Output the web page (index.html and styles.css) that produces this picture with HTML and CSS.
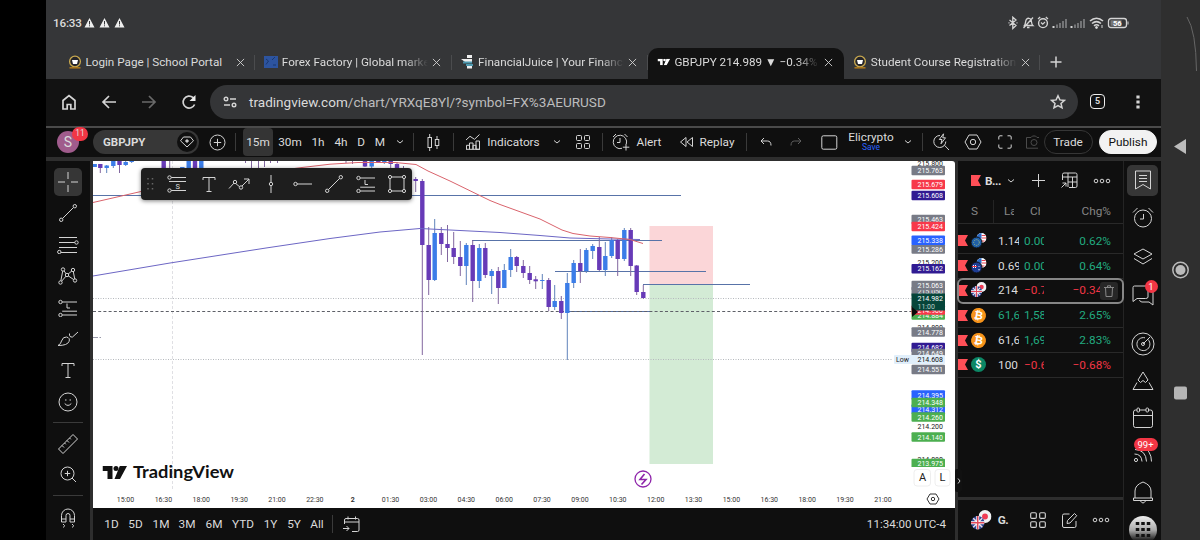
FILE: index.html
```html
<!DOCTYPE html>
<html lang="en">
<head>
  <meta charset="UTF-8">
  <title>GBPJPY 214.989 ▼ −0.34%</title>
  <link rel="stylesheet" href="styles.css">
</head>
<body>
  <svg width="0" height="0" class="sprite">
    <symbol id="close" viewBox="0 0 10 10"><path d="M1 1l8 8M9 1l-8 8"/></symbol>
    <symbol id="chev" viewBox="0 0 8 6"><path d="M1 1.500l3 2.500 3-2.500"/></symbol>
    <symbol id="flag" viewBox="0 0 10 11"><path d="M0 0h10l-3 5.500 3 5.500H0z" fill="#ff4f57" stroke="none"/></symbol>
    <symbol id="tiles" viewBox="0 0 16 16"><rect x="1.500" y="1.500" width="5" height="5" rx="1"/><rect x="9.500" y="1.500" width="5" height="5" rx="1"/><rect x="1.500" y="9.500" width="5" height="5" rx="1"/><rect x="9.500" y="9.500" width="5" height="5" rx="1"/></symbol>
    <symbol id="dots" viewBox="0 0 18 6"><circle cx="3" cy="3" r="1.800"/><circle cx="9" cy="3" r="1.800"/><circle cx="15" cy="3" r="1.800"/></symbol>
    <symbol id="fib" viewBox="0 0 20 18"><circle cx="2.500" cy="3" r="1.700"/><path d="M4.200 3H19M4.200 16H19M4.200 12.200H19"/><circle cx="2.500" cy="16" r="1.700"/></symbol>
    <symbol id="line" viewBox="0 0 18 18"><circle cx="2.200" cy="15.800" r="1.700"/><circle cx="15.800" cy="2.200" r="1.700"/><path d="M3.500 14.500l11-11"/></symbol>
    <symbol id="text" viewBox="0 0 14 17"><path d="M1 4V1.500h12V4M7 1.500v14M4.500 15.500h5"/></symbol>
    <symbol id="school" viewBox="0 0 14 14"><circle cx="7" cy="6.500" r="5.400" fill="#25252b" stroke="#c9a94f" stroke-width="1.300"/><path d="M4 5h6l-1 4H5z" fill="#fff" stroke="none"/><path d="M1.500 12.800h11" stroke="#a8751c" stroke-width="1.600"/></symbol>
    <symbol id="tv" viewBox="0 0 25 13"><path d="M0 0h10v13H5V5H0zM17.500 13H12L17.300 0H24.500z"/><circle cx="13.500" cy="2.500" r="2.500"/></symbol>
    <symbol id="uk" viewBox="0 0 12 12"><circle cx="6" cy="6" r="6" fill="#2c4796" stroke="none"/><path d="M2 2l8 8M10 2l-8 8" stroke="#f3dfe6" stroke-width="1.300"/><path d="M6 0v12M0 6h12" stroke="#fff" stroke-width="2.600"/><path d="M6 0v12M0 6h12" stroke="#e0485a" stroke-width="1.300"/></symbol>
    <symbol id="us" viewBox="0 0 10 10"><circle cx="5" cy="5" r="5" fill="#fff" stroke="none"/><path d="M5 2.500h4M5 5h5M2 8h6" stroke="#e6404e" stroke-width="1.200"/><path d="M5 0A5 5 0 0 0 0 5.500h5z" fill="#2b6cc9" stroke="none"/></symbol>
    <symbol id="jp" viewBox="0 0 12 12"><circle cx="6" cy="6" r="6" fill="#f2f2f4" stroke="none"/><circle cx="6" cy="6" r="2.700" fill="#f03c55" stroke="none"/></symbol>
  </svg>

  <div class="screen">
    <main class="app">
      <!-- Android status bar -->
      <div class="status">
        <span class="clock">16:33</span>
        <svg class="warn" width="42" height="12" viewBox="0 0 42 12"><path d="M5.500 1l5 9.500H.5zM20.500 1l5 9.500h-10zM35.500 1l5 9.500h-10z" fill="#eee" stroke="none"/><path d="M5.500 4v3.500M20.500 4v3.500M35.500 4v3.500M5.500 8.300v1M20.500 8.300v1M35.500 8.300v1" stroke="#353638"/></svg>
        <svg class="sys" width="122" height="14" viewBox="0 0 122 14">
          <path d="M2.500 4l6.500 5.500-3.200 3V1.200L9 4 2.500 9.500M1.500 6.800h1M9.500 6.800h1" stroke-width="1.300"/>
          <path d="M17.500 9.500c1.200-1.300.8-5 2-6.300 1.500-1.400 3.500-1.200 4.500.5.800 1.700.2 4.500 1.800 5.800zM20 11.500h2.500M16.500 12L26 1.500" stroke-width="1.300"/>
          <circle cx="36" cy="7.200" r="4.400" stroke-width="1.400"/><path d="M34 6.500l1.700 1.700L38 6M31 3l2.200-2M41 3l-2.200-2" stroke-width="1.200"/>
          <path d="M46.500 10v2M64.500 10v2" stroke-width="2"/>
          <path d="M50 8.500v3.500M53 7v5M56 5v7M59 3v9M68 8.500v3.500M71 7v5M74 5v7M77 3v9" stroke="#7b7c7e" stroke-width="1.800"/>
          <path d="M83 5c4-3.600 9-3.600 13 0M85 7.500c3-2.500 6-2.500 9 0M87 9.800c1.500-1.200 3.500-1.200 5 0" stroke-width="1.600"/><circle cx="89.500" cy="11.500" r="1" fill="#ddd"/><path d="M95 9v3"/>
          <rect x="101.500" y="2.500" width="18" height="9" rx="2.500" stroke-width="1.300"/><rect x="103.500" y="4.200" width="11" height="5.600" fill="#777" stroke="none"/><path d="M121 5.500v3"/>
          <text x="106" y="9.800" font-size="7.500" font-weight="700" fill="#fff" stroke="none">56</text>
        </svg>
      </div>

      <!-- browser tabs -->
      <div class="tabs">
        <div class="tab"><svg class="fav"><use href="#school"/></svg><span>Login Page | School Portal</span><svg class="x"><use href="#close"/></svg></div>
        <div class="tab"><svg class="fav" viewBox="0 0 14 14"><path d="M0 1h14v12H0z" fill="#2d549f" stroke="none"/><path d="M2 4l2.500 2L2 9.500M8 5l3-3M9 10h3" stroke="#19376f"/></svg><span class="fade">Forex Factory | Global markets</span><svg class="x"><use href="#close"/></svg></div>
        <div class="tab"><svg class="fav" viewBox="0 0 14 14"><path d="M6 0h5v3H6zM0 4h11v3H4zM6 11h5v2.500H6z" fill="#eee" stroke="none"/><path d="M2 7.500h9M5 10h7" stroke="#4d98ae" stroke-width="2"/></svg><span class="fade">FinancialJuice | Your Financial</span><svg class="x"><use href="#close"/></svg></div>
        <div class="tab active"><svg class="fav" viewBox="-1 -3 27 19"><use href="#tv" width="25" height="13" fill="#fff" stroke="none"/></svg><span class="fade">GBPJPY 214.989 ▼ −0.34%</span><svg class="x"><use href="#close"/></svg></div>
        <div class="tab"><svg class="fav"><use href="#school"/></svg><span class="fade">Student Course Registration</span><svg class="x"><use href="#close"/></svg></div>
        <svg class="newtab" width="12" height="12" viewBox="0 0 12 12"><path d="M6 .5v11M.5 6h11" stroke-width="1.500"/></svg>
      </div>

      <!-- address bar -->
      <div class="address">
        <svg width="16" height="16" viewBox="0 0 16 16"><path d="M2 6.500l6-5 6 5V15h-4.200v-4.500H6.200V15H2z" stroke-width="1.700"/></svg>
        <svg width="16" height="16" viewBox="0 0 16 16"><path d="M15 8H2M8 2L2 8l6 6" stroke-width="1.700"/></svg>
        <svg class="off" width="16" height="16" viewBox="0 0 16 16"><path d="M1 8h13M8 2l6 6-6 6" stroke-width="1.700"/></svg>
        <svg width="16" height="16" viewBox="0 0 16 16"><path d="M13.600 10.500A6 6 0 1 1 12 3.500l1 1" stroke-width="1.700"/><path d="M14.500 1v6h-6z" fill="#eee" stroke="none"/></svg>
        <div class="url">
          <svg width="14" height="12" viewBox="0 0 14 12"><circle cx="3" cy="3" r="1.800" stroke-width="1.400"/><path d="M7 3h6M1 9h6" stroke-width="1.500"/><circle cx="11" cy="9" r="1.800" stroke-width="1.400"/></svg>
          <span>tradingview.com<i>/chart/YRXqE8Yl/?symbol=FX%3AEURUSD</i></span>
          <svg class="star" width="16" height="16" viewBox="0 0 16 16"><path d="M8 1.800l1.900 4.100 4.500.5-3.400 3 1 4.400L8 11.500l-4 2.300 1-4.400-3.400-3 4.500-.5z" stroke-width="1.500"/></svg>
        </div>
        <b class="count">5</b>
        <svg width="6" height="14" viewBox="0 0 6 14"><path d="M3 .5v3M3 5.500v3M3 10.500v3" stroke-width="3.200"/></svg>
      </div>

      <!-- chart toolbar -->
      <div class="toolbar">
        <div class="avatar">S<em>11</em></div>
        <div class="symbol">GBPJPY<i><svg width="14" height="12" viewBox="0 0 14 12"><path d="M3.500 1h7l3 3.800L7 11 .5 4.800z"/><path d="M7 3.500l1.500 1.500L7 6.500 5.500 5z" fill="#ddd"/></svg></i></div>
        <svg width="17" height="17" viewBox="0 0 17 17"><circle cx="8.500" cy="8.500" r="7.500"/><path d="M8.500 4.800v7.400M4.800 8.500h7.400"/></svg>
        <hr>
        <b class="on">15m</b><b>30m</b><b>1h</b><b>4h</b><b>D</b><b>M</b>
        <svg width="8" height="6"><use href="#chev"/></svg>
        <hr>
        <svg width="13" height="17" viewBox="0 0 13 17"><rect x="1" y="3.500" width="3.500" height="10"/><path d="M2.700 0v3.500M2.700 13.500V17M10 2v3.500M10 11.500V15"/><rect x="8.300" y="5.500" width="3.500" height="6"/></svg>
        <hr>
        <svg width="16" height="16" viewBox="0 0 16 16"><path d="M1.500 15.300v-4h3v4M4.500 15.300V9h3.500v6.300M8 15.300v-4h3v4M11 15.300V7h3.500v8.300zM1 15.300h14M1 6l4-3.700 4.500 3 5-4.800"/></svg>
        <b>Indicators</b>
        <svg width="8" height="6"><use href="#chev"/></svg>
        <svg width="16" height="16"><use href="#tiles"/></svg>
        <hr>
        <svg width="18" height="18" viewBox="0 0 18 18"><path d="M14.300 11A6.700 6.700 0 1 0 10 15.300M8 5v4.500H5M1 4l3-3M15.500 4l-3-3M14 11v6.500M10.800 14.200h6.500"/></svg>
        <b>Alert</b>
        <svg width="15" height="12" viewBox="0 0 15 12"><path d="M7 1.500v9L1.500 6zM13.500 1.500v9L8 6z"/></svg>
        <b>Replay</b>
        <hr>
        <svg width="12" height="10" viewBox="0 0 12 10"><path d="M4 1L1 4l3 3M1 4h6.500q3.500 0 3.500 4.500"/></svg>
        <svg class="off" width="12" height="10" viewBox="0 0 12 10"><path d="M8 1l3 3-3 3M11 4H4.500Q1 4 1 8.500"/></svg>
        <svg width="17" height="15" viewBox="0 0 17 15"><rect x=".8" y=".8" width="15" height="13.400" rx="1.500"/></svg>
        <div class="layout">Elicrypto<em>Save</em></div>
        <svg width="8" height="6"><use href="#chev"/></svg>
        <hr>
        <svg width="17" height="18" viewBox="0 0 17 18"><path d="M7 2.500a6 6 0 1 0 5.800 6M11.500 12.300L16 17M10.500.8L6.300 6.500H9l-1 4.300 4.500-6H9.800z"/></svg>
        <svg width="18" height="16" viewBox="0 0 18 16"><path d="M5 1h8l4 7-4 7H5L1 8z"/><circle cx="9" cy="8" r="2.700"/></svg>
        <svg width="14" height="14" viewBox="0 0 14 14"><path d="M.8 4.500V2Q.8.800 2 .8h2.500M9.500.8H12q1.200 0 1.200 1.200v2.500M13.200 9.500V12q0 1.200-1.200 1.200H9.500M4.500 13.200H2Q.8 13.200.8 12V9.500"/></svg>
        <svg class="cam" width="14" height="14" viewBox="0 0 14 14"><path d="M14 2.500h-2L10.500 1h-3L6 2.500H1.500v10.700H13"/><circle cx="9" cy="7.500" r="3"/></svg>
        <div class="trade">Trade</div>
        <div class="publish">Publish</div>
      </div>

      <div class="work">
        <!-- drawing tools -->
        <div class="tools">
          <i class="sel"><svg width="20" height="20" viewBox="0 0 20 20"><path d="M10 0v7M10 13v7M0 10h7M13 10h7"/></svg></i>
          <svg width="18" height="18"><use href="#line"/></svg>
          <svg width="22" height="18" viewBox="0 0 22 18"><path d="M2 1.500h18M2 6.500h16M2 11.500h18M4 16.500h16"/><circle cx="19.500" cy="6.500" r="1.700" fill="#0f0f0f"/><circle cx="2.300" cy="16" r="1.700" fill="#0f0f0f"/></svg>
          <svg width="20" height="18" viewBox="0 0 20 18"><path d="M2.500 15.500l2.500-13L9 8l6-5 2 10.500L9 8l-6.500 7.500"/><g fill="#0f0f0f"><circle cx="2.500" cy="15.500" r="1.700"/><circle cx="5" cy="2.500" r="1.700"/><circle cx="9" cy="8" r="1.700"/><circle cx="15" cy="3" r="1.700"/><circle cx="17" cy="13.500" r="1.700"/></g></svg>
          <svg width="20" height="18"><use href="#fib"/><path d="M9 4.500V9h3"/></svg>
          <svg width="22" height="16" viewBox="0 0 22 16"><path d="M1 14.500Q4 13 4.500 10 6 5.500 9.500 6q4 1 2.500 4.500-1.500 4-11 4M12.500 2.500q-.5 4 3 3.500L21 1"/></svg>
          <svg width="14" height="17"><use href="#text"/></svg>
          <svg width="20" height="20" viewBox="0 0 20 20"><circle cx="10" cy="10" r="9"/><path d="M6.700 11.500q3.300 3.800 6.600 0M7 8h1.500M11.500 8H13"/></svg>
          <hr>
          <svg width="22" height="22" viewBox="0 0 22 22"><path d="M1.500 16L16 1.500 20.500 6 6 20.500zM5 12.500l2 2M7.500 10l1.300 1.300M10 7.500l2 2M12.500 5l1.300 1.300"/></svg>
          <svg width="17" height="17" viewBox="0 0 17 17"><circle cx="7.500" cy="7.500" r="6.500"/><path d="M12 12l4 4M7.500 4.800v5.400M4.800 7.500h5.400"/></svg>
          <hr>
          <svg width="16" height="20" viewBox="0 0 16 20"><path d="M1.500 14V7.500a6.500 6.500 0 0 1 13 0V14H10V7.500a2 2 0 0 0-4 0V14zM1.500 11H6M10 11h4.500M3 16l1.500 1.500-1 2M12 16l1.500 1.500-1 2"/></svg>
        </div>

        <section class="center">
          <!-- viewBox uses page coordinates; candles are appended by script.js -->
          <svg class="chart" width="862" height="347" viewBox="93 161 862 347">
            <rect x="93" y="161" width="862" height="347" fill="#fff" stroke="none"/>
            <rect x="649.500" y="226" width="63.500" height="59" fill="#fbd6d8" stroke="none"/>
            <rect x="649.500" y="285" width="63.500" height="179" fill="#d3ebd5" stroke="none"/>
            <path d="M172.500 161v330" stroke="#e0e0e4" stroke-dasharray="3 2"/>
            <path d="M93 298.500h819M93 359.500h800" stroke="#b5b8bd" stroke-dasharray="1 1.500"/>
            <path d="M93 337.500h5M99.500 337.500h1.500" stroke="#99a"/>
            <path d="M93 195.500H681M567 311.500h84M472 240.500h190M555 271.500h151M643 284.500h107" stroke="#5873a8"/>
            <path d="M93 311.500h819" stroke="#5e6068" stroke-dasharray="3 2.200"/>
            <g id="candles"></g>
            <path d="M93 276l77-13 96-15 64-9.500 50-6.500 40-3.500 30 1.500 50 2.500 40 3 30 2.500 40 1 30 .5" stroke="#6c66c4"/>
            <path d="M93 202.500l48-11 100-16 61-8 28-3.300 28-1.700h37l21 2 12 6.500 22 10 40 19.500 10 4 40 14.500 22 11 11 3.500 17 2.500 20 1.500 20 2 13 4" stroke="#d9636c"/>
            <g id="prices"></g>
            <path d="M912 307l6 5-6 5z" fill="#0b0b0b" stroke="none"/>
            <g fill="#fff" stroke="#eee"><rect x="914" y="469.500" width="16.500" height="16.500" rx="3"/><rect x="935" y="469.500" width="15" height="16.500" rx="3"/></g>
            <g font-size="11" fill="#222" stroke="none"><text x="919" y="481">A</text><text x="939.500" y="481">L</text></g>
            <g id="times" font-size="7" fill="#333" stroke="none" text-anchor="middle"></g>
            <g stroke="#333" fill="none"><path d="M930 494h6l3 5-3 5h-6l-3-5z"/><circle cx="933" cy="499" r="1.700"/></g>
            <g fill="none" stroke="#8e24aa"><circle cx="643" cy="479" r="8" stroke-width="1.300"/><path d="M644.500 474l-4.500 5.500h6l-4.500 5" stroke-width="1.600"/></g>
            <g fill="#111" stroke="none"><use href="#tv" x="102.500" y="466" width="25" height="13"/><text class="brand" x="133" y="478.300" textLength="101" lengthAdjust="spacingAndGlyphs">TradingView</text></g>
          </svg>

          <div class="floatbar">
            <svg width="8" height="14" viewBox="0 0 8 14"><path d="M2 1v12M6.500 1v12" stroke="#666" stroke-width="1.500" stroke-dasharray="1.500 3.500"/></svg>
            <svg width="20" height="18" viewBox="0 0 20 18"><circle cx="2.500" cy="2.500" r="1.700"/><circle cx="2.500" cy="15.500" r="1.700"/><path d="M4.200 2.500H19M4.200 15.500H19M2 6.500H19"/><text x="8.500" y="14" font-size="7.500" fill="#ddd" stroke="none">S</text></svg>
            <svg width="14" height="17"><use href="#text"/></svg>
            <svg width="23" height="14" viewBox="0 0 23 14"><path d="M1 11.500l5.500-6 6 5L21 2M16 2h5v5"/><g fill="#1e1e1e"><circle cx="7" cy="5" r="1.700"/><circle cx="13" cy="10.500" r="1.700"/></g></svg>
            <svg width="8" height="18" viewBox="0 0 8 18"><path d="M4 0v18"/><circle cx="4" cy="9" r="1.700" fill="#1e1e1e"/></svg>
            <svg width="19" height="6" viewBox="0 0 19 6"><path d="M4 3h15"/><circle cx="2.500" cy="3" r="1.700"/></svg>
            <svg width="18" height="18"><use href="#line"/></svg>
            <svg width="20" height="18"><use href="#fib"/><path d="M9 5v4.500h3"/></svg>
            <svg width="18" height="18" viewBox="0 0 18 18"><rect x="2" y="2" width="14" height="14"/><g fill="#1e1e1e"><circle cx="2" cy="2" r="1.600"/><circle cx="16" cy="2" r="1.600"/><circle cx="2" cy="16" r="1.600"/><circle cx="16" cy="16" r="1.600"/></g></svg>
          </div>

          <footer>
            <b>1D</b><b>5D</b><b>1M</b><b>3M</b><b>6M</b><b>YTD</b><b>1Y</b><b>5Y</b><b>All</b>
            <hr>
            <svg width="17" height="17" viewBox="0 0 17 17"><path d="M1.500 8V4q0-1.500 1.500-1.500h11.500Q16 2.500 16 4v10q0 1.500-1.500 1.500H9M1.500 6H16M5 .5v3M12.500.5v3M0 12.500h6M3.500 10L6 12.500 3.500 15"/></svg>
            <span>11:34:00 UTC-4</span>
          </footer>
        </section>

        <!-- watchlist -->
        <aside class="watch">
          <i class="handle"><svg width="4" height="8" viewBox="0 0 4 8"><path d="M1 1.500L3 4 1 6.500"/></svg></i>
          <div class="whead">
            <svg width="10" height="11"><use href="#flag"/></svg><b>B...</b>
            <svg width="8" height="6"><use href="#chev"/></svg>
            <svg width="13" height="13" viewBox="0 0 13 13"><path d="M6.500 0v13M0 6.500h13"/></svg>
            <svg width="17" height="17" viewBox="0 0 17 17"><path d="M1.500 8V2.500q0-1.500 1.500-1.500h11.500q1.500 0 1.500 1.500v11.500q0 1.500-1.500 1.500H8M1.500 5H16M7 1v14M11.500 5v10.500M7 10h9M.5 15.500l4.500-4.500M1.500 11H5v3.500"/></svg>
            <svg width="18" height="6"><use href="#dots"/></svg>
          </div>
          <div class="cols"><span>S</span><span>Last</span><span>Chg</span><span>Chg%</span></div>
          <div class="row"><svg class="rf"><use href="#flag"/></svg><svg class="pair"><use href="#us" x="5.500" width="10" height="10"/><circle cx="5.500" cy="9.500" r="5.500" fill="#1f5fa8" stroke="#0f0f0f"/><circle cx="5.500" cy="9.500" r="2.800" stroke="#aabf78" stroke-dasharray="1 1"/></svg><span>1.14</span><span class="up">0.00</span><span class="up">0.62%</span></div>
          <div class="row"><svg class="rf"><use href="#flag"/></svg><svg class="pair"><use href="#us" x="5.500" width="10" height="10"/><circle cx="5.500" cy="9.500" r="5.500" fill="#1d3c93" stroke="#0f0f0f"/><path d="M2 7l3 3M5 7l-3 3M8 8v.8M8 11v1.300" stroke="#fff"/><path d="M1 8.500h5" stroke="#e34"/></svg><span>0.69</span><span class="up">0.00</span><span class="up">0.64%</span></div>
          <div class="row picked"><svg class="rf"><use href="#flag"/></svg><svg class="pair"><use href="#jp" x="5.500" width="10" height="10"/><use href="#uk" y="4" width="11" height="11"/></svg><span>214</span><span class="down">−0.73</span><span class="down">−0.34%</span><i class="trash"><svg width="10" height="12" viewBox="0 0 10 12"><path d="M0 2.500h10M3.500 2.500V.8h3v1.700M1.500 2.500l.5 9h6l.5-9"/></svg></i></div>
          <div class="row"><svg class="rf"><use href="#flag"/></svg><i class="coin btc">₿</i><span class="up">61,68</span><span class="up">1,588</span><span class="up">2.65%</span></div>
          <div class="row"><svg class="rf"><use href="#flag"/></svg><i class="coin btc">₿</i><span>61,68</span><span class="up">1,695</span><span class="up">2.83%</span></div>
          <div class="row"><svg class="rf"><use href="#flag"/></svg><i class="coin usd">$</i><span>100</span><span class="down">−0.68</span><span class="down">−0.68%</span></div>
          <div class="detail">
            <svg width="21" height="20" viewBox="0 0 21 20"><use href="#jp" x="7.500" width="13" height="13"/><use href="#uk" y="6" width="13.500" height="13.500"/></svg><b>G.</b>
            <svg width="18" height="18"><use href="#tiles"/></svg>
            <svg width="17" height="17" viewBox="0 0 17 17"><path d="M8.500 2H3Q1.500 2 1.500 3.500V14q0 1.500 1.500 1.500h10.500q1.500 0 1.500-1.500V9M6 11.500l.5-3L13.500 1.500l2.200 2.200L9 11z"/></svg>
            <svg width="18" height="6"><use href="#dots"/></svg>
          </div>
        </aside>

        <!-- right widget bar -->
        <nav class="widgets">
          <i class="sel"><svg width="18" height="20" viewBox="0 0 18 20"><path d="M1.500 1h15v18L9 14.500 1.500 19zM5 5.500h8M5 8.500h8M5 11.500h8"/></svg></i>
          <svg width="22" height="21" viewBox="0 0 22 21"><circle cx="11" cy="11.500" r="8.500"/><path d="M11.500 7v5H8M1 5.500L5.500 1M21 5.500L16.500 1"/></svg>
          <svg width="20" height="18" viewBox="0 0 20 18"><path d="M10 1l9 5-9 5-9-5zM1 10.500l9 5.500 9-5.500"/></svg>
          <div class="bub"><svg width="22" height="22" viewBox="0 0 22 22"><path d="M14.500 1H2.500Q1 1 1 2.500v14l4-3h8.500Q16 13.500 16 12V6M18 6q3 0 3 1.500v12.500l-4-3H10q-2 0-2.500-2"/></svg><em>1</em></div>
          <svg width="24" height="24" viewBox="0 0 24 24"><circle cx="12" cy="12" r="11"/><path d="M17 7.500A6.500 6.500 0 1 1 14 5.800M12 12l7-7"/><circle cx="12" cy="12" r="1.500"/></svg>
          <svg width="22" height="20" viewBox="0 0 22 20"><path d="M11 1l5 8-2.500 2.500L11 9.500l-2.500 2L6 9zM5 11.500L1 18.500h20l-4-7"/></svg>
          <svg width="22" height="22" viewBox="0 0 22 22"><rect x="1.500" y="3" width="19" height="17.500" rx="2"/><path d="M1.500 8.500h19"/><g fill="#0f0f0f"><rect x="5" y="1" width="2.500" height="4" rx="1"/><rect x="14" y="1" width="2.500" height="4" rx="1"/></g></svg>
          <div class="feed"><svg width="20" height="17" viewBox="0 0 20 17"><circle cx="3" cy="14" r="1.600"/><path d="M1.500 8q7 0 7.500 7.500M2 3.500q11 .5 11.500 12M8 0q10.500 4 10.500 15.500"/></svg><em>99+</em></div>
          <svg width="22" height="23" viewBox="0 0 22 23"><path d="M3 17V10q0-6 8-9 8 3 8 9v7M1.500 17h19v2.500h-19zM8.500 20q2.500 4 5 0"/></svg>
          <i class="apps"><svg width="16" height="16" viewBox="0 0 16 16"><path d="M2.500 0v16M8 0v16M13.500 0v16" stroke="#111" stroke-width="3.500" stroke-dasharray="3 3"/></svg></i>
        </nav>
      </div>
    </main>

    <div class="phone">
      <svg width="39" height="540" viewBox="0 0 39 540"><path d="M26 17q9 14 9.500 54" stroke="#666"/><path d="M13 146.500l12-7.500v15z" fill="#bbb" stroke="none"/><circle cx="19.500" cy="270" r="7.700" stroke="#bbb" stroke-width="1.500"/><circle cx="19.500" cy="270" r="5" fill="#bbb" stroke="none"/><rect x="13" y="386.500" width="13" height="13" rx="2" fill="#b5b5b5" stroke="none"/></svg>
    </div>
  </div>
  <script src="script.js"></script>
</body>
</html>
```

FILE: styles.css
```css
:root {
  --panel: #0f0f0f;
  --gap: #2e2e2e;
  --chrome: #353638;
  --red: #f23645;
  --up: #22ab80;
}
* {
  box-sizing: border-box;
}
body {
  margin: 0;
  background: #000;
  color: #dbdbdb;
  font-family: Roboto, "Liberation Sans", sans-serif;
  font-size: 11.800px;
}
svg {
  display: block;
  flex: none;
  fill: none;
  stroke: #d4d4d4;
}
.sprite {
  position: absolute;
}
i, em {
  font-style: normal;
}
b {
  font-weight: 400;
}
hr {
  width: 1px;
  height: 18px;
  margin: 0;
  border: 0;
  background: #3a3a3a;
}
.screen {
  display: flex;
  width: 1200px;
  height: 540px;
  padding-left: 46px;
  overflow: hidden;
}
.app {
  width: 1115px;
}
.phone {
  width: 39px;
  background: #2f2f2f;
}

/* status bar */
.status {
  display: flex;
  align-items: center;
  height: 48px;
  padding: 0 32px 2px 7px;
  background: var(--chrome);
}
.clock {
  width: 31px;
  font-size: 11.700px;
  font-weight: 500;
  letter-spacing: -.2px;
}
.sys {
  margin-left: auto;
}

/* tabs */
.tabs {
  display: flex;
  align-items: center;
  height: 31px;
  padding-left: 13px;
  background: var(--chrome);
}
.tab {
  display: flex;
  align-items: center;
  width: 196.300px;
  height: 31px;
  padding-left: 9px;
  padding-bottom: 3px;
  font-size: 11.700px;
  background: linear-gradient(#4b4c4e, #4b4c4e) right 7px / 1px 15px no-repeat;
}
.tab span {
  width: 146px;
  margin-left: 3.500px;
  overflow: hidden;
  white-space: nowrap;
}
.tab .fade {
  -webkit-mask-image: linear-gradient(90deg, #000 84%, transparent);
  mask-image: linear-gradient(90deg, #000 84%, transparent);
}
.fav {
  width: 14px;
  height: 14px;
}
.x {
  width: 9px;
  height: 9px;
  margin-left: 4px;
}
.tab.active {
  background: #121212;
  border-radius: 10px 10px 0 0;
}
.newtab {
  margin: -3px 0 0 10px;
}

/* address bar */
.address {
  display: flex;
  align-items: center;
  height: 49px;
  padding: 0 20px 2px 15px;
  background: #121212;
  border-bottom: 2px solid #4a4a4a;
}
.address > svg {
  margin-right: 24px;
}
.address > svg:last-child {
  margin: 0 0 0 auto;
}
.address .off {
  opacity: .45;
}
.url {
  display: flex;
  align-items: center;
  width: 868px;
  height: 34px;
  margin-left: -11px;
  padding: 0 12px 0 13px;
  border-radius: 17px;
  background: #343537;
  font-size: 13.550px;
}
.url span {
  margin-left: 12px;
}
.url i {
  color: #bcbcbd;
}
.url .star {
  margin-left: auto;
}
.count {
  width: 15px;
  height: 15px;
  margin-left: 12px;
  border: 1.500px solid #eee;
  border-radius: 4px;
  font-size: 9px;
  font-weight: 700;
  line-height: 12px;
  text-align: center;
}

/* toolbar */
.toolbar {
  display: grid;
  grid-template-columns: 44px 115px 24px 13px 32px 32px 24px 22px 18px 20px 20px 7px 33px 6px 33px 49px 38px 13px 26px 12px 44px 30px 32px 26px 14px 46px 20px 64px 10px 18px 20px 44px 19px 36px 40px 71px;
  align-items: center;
  justify-items: center;
  height: 29px;
  padding-bottom: 2px;
  background: var(--panel);
}
.toolbar b {
  white-space: nowrap;
}
.toolbar .on {
  width: 30px;
  height: 28px;
  line-height: 28px;
  border-radius: 4px;
  background: #343434;
  text-align: center;
}
.toolbar .off {
  opacity: .4;
}
.avatar {
  position: relative;
  width: 22px;
  height: 22px;
  border-radius: 50%;
  background: #a05c8c;
  font-size: 14px;
  line-height: 23px;
  text-align: center;
}
.avatar em {
  position: absolute;
  top: -4px;
  left: 15px;
  width: 16px;
  height: 14px;
  border-radius: 7px;
  background: var(--red);
  font-size: 8.500px;
  line-height: 13px;
}
.symbol {
  display: flex;
  align-items: center;
  justify-content: space-between;
  justify-self: start;
  width: 106px;
  height: 24px;
  margin-left: 3px;
  padding: 0 2px 0 10px;
  border-radius: 12px;
  background: #373737;
  font-size: 11.500px;
  font-weight: 700;
}
.symbol i {
  display: grid;
  place-items: center;
  width: 20px;
  height: 20px;
  border-radius: 50%;
  background: #101010;
}
.layout {
  font-size: 11.800px;
  line-height: 10px;
  text-align: center;
}
.layout em {
  display: block;
  color: #2962ff;
  font-size: 8.500px;
}
.cam {
  opacity: .3;
}
.trade, .publish {
  width: 49px;
  height: 24px;
  border: 1px solid #363636;
  border-radius: 12px;
  line-height: 22px;
  text-align: center;
}
.trade {
  margin-left: -4px;
}
.publish {
  width: 58px;
  margin-left: 5px;
  border-color: #f2f2f2;
  background: #f2f2f2;
  color: #111;
}

/* workspace */
.work {
  display: flex;
  height: 383px;
  border-top: 4px solid var(--gap);
  background: var(--gap);
}
.tools {
  display: grid;
  grid-template-rows: 32px 31px 32px 31px 32px 31px 31px 32px 10px 32px 30px 12px 32px;
  place-items: center;
  align-content: start;
  width: 44px;
  height: 379px;
  padding-top: 4.500px;
  background: var(--panel);
}
.tools hr {
  width: 30px;
  height: 1px;
}
.sel {
  display: grid;
  place-items: center;
  width: 28px;
  height: 28px;
  border-radius: 5px;
  background: #363636;
}
.center {
  position: relative;
  width: 862px;
  margin: 0 3px;
}
.chart {
  border-radius: 0 3px 0 0;
}
.brand {
  font-family: Lato, sans-serif;
  font-size: 17.500px;
  font-weight: 700;
}
.floatbar {
  position: absolute;
  top: 7px;
  left: 48px;
  display: grid;
  grid-template-columns: 18px 35px 29px 33px 30px 32px 31px 33px 30px;
  place-items: center;
  width: 271px;
  height: 32px;
  border-radius: 4px;
  background: #1e1e1e;
  box-shadow: 0 1px 4px rgba(0, 0, 0, .5);
}
footer {
  display: grid;
  grid-template-columns: 23px 25px 26px 26px 28px 30px 25px 22px 24px 7px 31px 1fr;
  align-items: center;
  justify-items: center;
  height: 32px;
  padding: 0 9px 0 7px;
  background: var(--panel);
}
footer span {
  justify-self: end;
  font-size: 11.600px;
}

/* watchlist */
.watch {
  position: relative;
  display: flex;
  flex-direction: column;
  width: 166px;
  background: var(--panel);
  border-right: 1px solid #242424;
}
.handle {
  position: absolute;
  left: -3px;
  top: 308px;
  display: grid;
  place-items: center;
  width: 7px;
  height: 23px;
  border-radius: 2px;
  background: #111;
}
.whead {
  display: grid;
  grid-template-columns: 14px 20px 16px 39px 23px 41px;
  place-items: center;
  height: 39px;
  padding-left: 11px;
}
.whead b, .detail b {
  font-weight: 700;
  letter-spacing: -.5px;
}
.cols, .row {
  display: grid;
  align-items: center;
  color: #868686;
}
.cols {
  grid-template-columns: 36px 26px 26px 1fr;
  height: 24px;
  border-bottom: 1px solid #292929;
  margin-bottom: 5px;
}
.cols span {
  overflow: hidden;
  height: 23px;
  line-height: 23px;
  white-space: nowrap;
  border-right: 1px solid #242424;
}
.cols span:nth-child(1) {
  padding-left: 13px;
}
.cols span:nth-child(2), .cols span:nth-child(3) {
  padding-left: 10px;
  border-right: 6px solid var(--panel);
}
.cols span:last-child {
  padding-right: 12px;
  border: 0;
  text-align: right;
}
.row {
  position: relative;
  grid-template-columns: 13px 27px 21px 5px 20px 1fr;
  height: 24.800px;
  border-bottom: 1px solid #292929;
  color: #dbdbdb;
}
.row span {
  overflow: hidden;
  white-space: nowrap;
}
.row span:nth-child(4) {
  grid-column: 5;
}
.row span:nth-child(5) {
  grid-column: 6;
  padding-right: 12px;
  text-align: right;
}
.row .up {
  color: var(--up);
}
.row .down {
  color: var(--red);
}
.rf {
  width: 10px;
  height: 11px;
}
.pair {
  width: 16px;
  height: 16px;
}
.coin {
  display: grid;
  place-items: center;
  width: 15px;
  height: 15px;
  border-radius: 50%;
  color: #fff;
  font-size: 11px;
  font-weight: 700;
  line-height: 15px;
}
.btc {
  background: #f7931a;
  transform: rotate(10deg);
}
.usd {
  background: #0c8765;
}
.picked {
  outline: 2px solid #868686;
  outline-offset: -1px;
  border-radius: 5px;
}
.trash {
  position: absolute;
  right: 5px;
  top: 3px;
  display: grid;
  place-items: center;
  width: 18px;
  height: 18px;
  border-radius: 3px;
  background: #272727;
}
.trash svg {
  stroke: #888;
}
.detail {
  display: grid;
  grid-template-columns: 22px 22px 47px 17px 46px;
  place-items: center;
  height: 43px;
  margin-top: auto;
  padding-left: 12px;
  border-top: 3px solid var(--gap);
}

/* widget bar */
.widgets {
  display: grid;
  grid-template-rows: 38px 37px 41px 38px 58px 16px 57px 17px 58px 18px;
  place-items: center;
  width: 37px;
  background: var(--panel);
}
.widgets .sel {
  width: 31px;
  height: 31px;
}
.bub, .feed {
  position: relative;
}
.bub em, .feed em {
  position: absolute;
  top: -5px;
  right: -4px;
  height: 13px;
  min-width: 13px;
  border-radius: 7px;
  background: var(--red);
  color: #fff;
  font-size: 9.500px;
  line-height: 13px;
  text-align: center;
}
.feed em {
  top: -8px;
  right: -5px;
  width: 24px;
}
.apps {
  display: grid;
  place-items: center;
  width: 28px;
  height: 28px;
  border-radius: 50%;
  background: linear-gradient(#eee, #aaa 50%, #222 85%);
}
```

FILE: script.js
```js
const NS = 'http://www.w3.org/2000/svg';

function add(parent, tag, attrs, text) {
  const el = document.createElementNS(NS, tag);
  for (const k in attrs) el.setAttribute(k, attrs[k]);
  if (text) el.textContent = text;
  parent.appendChild(el);
}

// x, high, body top, body bottom, low, up
const candles = [
  [94.7, 164, 164, 167, 167, 1], [100.3, 164, 164, 168, 173, 0], [106.7, 165, 165.5, 168, 173, 1],
  [113.3, 160, 160, 166, 168, 1], [119.5, 160, 160, 165, 173, 0], [125.7, 161, 162, 165, 166, 1],
  [131.7, 160, 160, 162, 163, 1], [163.7, 160, 160, 169, 169, 0], [169.7, 160, 160, 160, 169, 0],
  [182.3, 167, 167, 170, 170, 1], [188.7, 160, 160, 168, 168, 1], [195, 160, 160, 170, 170, 0],
  [201.3, 160, 160, 170, 170, 1], [245.5, 160, 160, 160, 163, 0], [251.5, 160, 160, 160, 169, 0],
  [258.5, 160, 160, 160, 168, 0], [264.5, 160, 160, 160, 167, 0], [270.5, 160, 160, 160, 163, 0],
  [277.5, 160, 160, 160, 163, 0], [346, 160, 160, 160, 163, 0], [352.5, 160, 160, 160, 164, 0],
  [365, 160, 160, 166.5, 167, 0], [371.7, 160, 160, 166.5, 168, 1], [378.3, 160, 160, 162, 163, 0],
  [384.3, 160, 160, 162, 164, 1], [390.7, 160, 160, 164, 168, 0], [397, 162, 164, 169, 169, 0],
  [403.5, 166, 168, 168, 170, 0], [415.7, 177, 179, 181, 192, 0], [422.3, 179, 181, 245, 355, 0],
  [428.7, 227, 245, 280, 295, 0], [434.7, 219, 233, 280, 281, 1], [441.3, 227, 233, 244, 255, 0],
  [447.5, 225, 244, 248, 262, 0], [453.7, 232, 248, 257, 264, 0], [460.3, 241, 257, 266, 276, 0],
  [466.3, 243, 245, 266, 285, 1], [472.7, 240, 245, 281, 302, 0], [479.3, 244, 248, 281, 288, 1],
  [485.3, 243, 248, 275, 278, 0], [491.7, 269, 271, 276, 294, 1], [498.3, 267, 271, 288, 304, 0],
  [504.3, 264, 270, 288, 288, 1], [510.7, 249, 257, 270, 277, 1], [516.7, 256, 257, 266, 272, 0],
  [523.3, 260, 266, 273, 278, 0], [529.7, 266, 273, 280, 284, 0], [535.7, 276, 279.3, 281.3, 289, 0],
  [542.3, 274, 280, 281, 289, 1], [548.7, 278, 280, 307, 311, 0], [554.7, 285, 301, 307, 310, 1],
  [561.3, 296, 301, 313, 319, 0], [567.3, 273, 283, 313, 360, 1], [573.7, 260, 263, 283, 288, 1],
  [580.3, 249, 263, 271, 283, 0], [586.3, 248, 250, 271, 273, 1], [592.7, 244, 246, 251, 259, 1],
  [599.3, 237, 247, 270, 271, 0], [605.3, 242, 256, 270, 276, 1], [611.7, 237, 240, 256, 258, 1],
  [617.7, 239, 240, 259, 276, 0], [624.3, 228, 230, 259, 261, 1], [630.7, 228, 230, 266, 276, 0],
  [636.7, 265, 265.5, 292, 295, 0], [643.3, 285, 292, 298, 299, 0]
];
const candleLayer = document.getElementById('candles');
candles.forEach(([x, hi, top, bot, lo, up]) => {
  add(candleLayer, 'path', { d: `M${x} ${hi}V${lo}`, stroke: up ? '#5f83bb' : '#82679f' });
  add(candleLayer, 'rect', { x: x - 2.2, y: top, width: 4.4, height: bot - top, fill: up ? '#3b7de8' : '#673ab7', stroke: 'none' });
});

// y centre, price, label colour (none = plain scale tick)
const gray = '#787b86', navy = '#311b92', green = '#4caf50', blue = '#2962ff', red = '#f7384a';
const prices = [
  [163.5, '215.800'], [170.5, '215.763', gray], [184.5, '215.679', red], [195.5, '215.608', navy],
  [219.5, '215.463', gray], [226.5, '215.424', red], [249, '215.286', gray], [240.3, '215.338', blue],
  [262.5, '215.200'], [268.7, '215.162', navy], [291.5, '215.050', gray], [285.5, '215.063', gray],
  [315, '214.884', green], [310, '214.900', red], [327.5, '214.800'], [332, '214.778', gray],
  [347.5, '214.682', navy], [353.5, '214.649', gray], [369.5, '214.551', gray], [395, '214.395', blue],
  [409, '214.312', blue], [402.5, '214.348', green], [417, '214.260', green], [426.5, '214.200'],
  [437, '214.140', green], [459.5, '214.080'], [463.5, '213.975', green]
];
const priceLayer = document.getElementById('prices');
prices.forEach(([y, label, color]) => {
  if (color) add(priceLayer, 'rect', { x: 911.5, y: y - 4.7, width: 33.5, height: 9.4, rx: 1, fill: color, stroke: 'none' });
  add(priceLayer, 'text', { x: 917.5, y: y + 2.5, 'font-size': 7, fill: color ? '#fff' : '#222', stroke: 'none' }, label);
});
add(priceLayer, 'rect', { x: 911.5, y: 293.5, width: 33.5, height: 17, fill: '#06453a', stroke: 'none' });
add(priceLayer, 'text', { x: 917.5, y: 301, 'font-size': 7, fill: '#fff', stroke: 'none' }, '214.982');
add(priceLayer, 'text', { x: 917.5, y: 308.5, 'font-size': 7, fill: '#b9cdc9', stroke: 'none' }, '11:00');
add(priceLayer, 'rect', { x: 894, y: 355, width: 51, height: 9, rx: 1, fill: '#e1effb', stroke: 'none' });
add(priceLayer, 'text', { x: 896, y: 362, 'font-size': 7, fill: '#222', stroke: 'none' }, 'Low');
add(priceLayer, 'text', { x: 917.5, y: 362, 'font-size': 7, fill: '#111', stroke: 'none' }, '214.608');
add(priceLayer, 'rect', { x: 911, y: 467, width: 35, height: 3, fill: '#fff', stroke: 'none' });

const times = ['15:00', '16:30', '18:00', '19:30', '21:00', '22:30', '2', '01:30', '03:00', '04:30', '06:00',
  '07:30', '09:00', '10:30', '12:00', '13:30', '15:00', '16:30', '18:00', '19:30', '21:00'];
const timeLayer = document.getElementById('times');
times.forEach((t, i) => {
  add(timeLayer, 'text', { x: 125.5 + i * 37.87, y: 501.5, 'font-weight': t === '2' ? 700 : 400 }, t);
});
```
